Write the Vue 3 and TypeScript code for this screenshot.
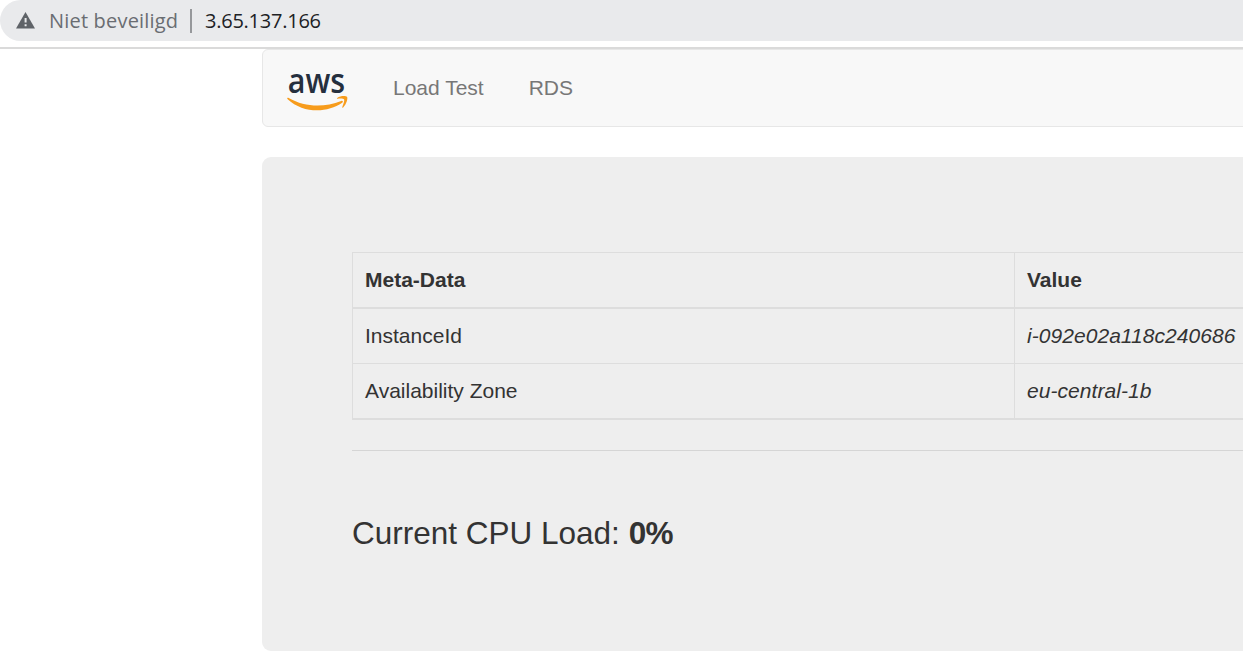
<script setup lang="ts">
interface MetaRow {
  label: string
  value: string
}

const links: string[] = ['Load Test', 'RDS']
const rows: MetaRow[] = [
  { label: 'InstanceId', value: 'i-092e02a118c240686' },
  { label: 'Availability Zone', value: 'eu-central-1b' },
]
const cpuLoad = 0
</script>

<template>
  <div class="page">
    <header class="toolbar">
      <div class="address">
        <svg class="warn" width="20" height="17" viewBox="0 0 20 17">
          <path d="M9.5 0 19 16.6H0Z" fill="#5f6368" />
          <path d="M8.6 6h2v4.6h-2zM8.6 12.2h2v2.1h-2z" fill="#e9eaec" />
        </svg>
        <span class="security">Niet beveiligd</span>
        <span class="divider"></span>
        <span class="url">3.65.137.166</span>
      </div>
    </header>
    <main class="container">
      <nav class="navbar">
        <svg class="logo" width="64" height="54" viewBox="0 0 64 54">
          <text x="-0.2" y="33.6" textLength="57.4" lengthAdjust="spacingAndGlyphs">aws</text>
          <g transform="translate(-2 10.3)" fill="#f79c1c">
            <path d="M1.4 29.6C0.9 28.6 1.7 28.2 2.7 28.7C19 38 38 38.4 55.2 31.6C56.8 31 57.6 32.5 56.2 33.5C41 43.8 17.5 44.5 1.4 29.6Z" />
            <path d="M51.2 28.6C54.2 26.4 59.8 26.3 61 27.5C62.2 29 60.4 35.1 57.2 38.1C56.6 38.6 56 38.3 56.3 37.6C57.2 35.4 58.7 31.2 58.1 30.2C57.4 29 53.9 29.1 51.7 29.5C50.9 29.6 50.7 29 51.2 28.6Z" />
          </g>
        </svg>
        <a v-for="link in links" :key="link" class="link">{{ link }}</a>
      </nav>
      <section class="jumbotron">
        <div class="table">
          <div class="row head">
            <div class="cell">Meta-Data</div>
            <div class="cell">Value</div>
          </div>
          <div v-for="row in rows" :key="row.label" class="row">
            <div class="cell">{{ row.label }}</div>
            <div class="cell"><i>{{ row.value }}</i></div>
          </div>
        </div>
        <div class="rule"></div>
        <p class="load">Current CPU Load: <b>{{ cpuLoad }}%</b></p>
      </section>
    </main>
  </div>
</template>

<style>
body {
  margin: 0;
  overflow: hidden;
  background: #fff;
}
</style>

<style scoped>
.page {
  height: 655px;
  overflow: hidden;
  background: #fff;
  font-family: "Liberation Sans", Arial, sans-serif;
  color: #333;
}
.toolbar {
  box-sizing: border-box;
  height: 49px;
  border-bottom: 2px solid #dadada;
}
.address {
  display: flex;
  align-items: center;
  box-sizing: border-box;
  height: 41px;
  padding-left: 16px;
  border-radius: 21px 0 0 21px;
  background: #e9eaec;
  font: 20px/41px "Open Sans", "Noto Sans", sans-serif;
  white-space: nowrap;
}
.security {
  width: 128px;
  margin-left: 13px;
  color: #6a6d72;
  letter-spacing: 0.19px;
}
.divider {
  width: 2px;
  height: 24px;
  margin: 0 13px 0 13px;
  background: #96989b;
}
.url {
  color: #202124;
  letter-spacing: -0.24px;
}
.container {
  width: 1230px;
  margin-left: 262px;
}
.navbar {
  display: flex;
  box-sizing: border-box;
  height: 78px;
  padding-left: 25px;
  border: 1px solid #e7e7e7;
  border-radius: 6px;
  background: #f8f8f8;
}
.logo {
  overflow: visible;
  margin-top: 9px;
  margin-right: 41px;
}
.logo text {
  font: 600 34px "Open Sans", sans-serif;
  fill: #252f3e;
}
.link {
  margin-right: 45px;
  color: #777;
  font-size: 21px;
  line-height: 76px;
}
.jumbotron {
  box-sizing: border-box;
  height: 494px;
  margin-top: 30px;
  padding: 95px 90px 0;
  border-radius: 9px;
  background: #eee;
}
.table {
  border: 1px solid #ddd;
  border-bottom-width: 2px;
}
.row {
  display: grid;
  grid-template-columns: 661px 1fr;
  height: 54px;
  font-size: 21px;
  line-height: 54px;
}
.row + .row {
  border-top: 1px solid #ddd;
}
.head {
  border-bottom: 1px solid #ddd;
  font-weight: 700;
}
.cell {
  padding-left: 12px;
}
.cell i {
  letter-spacing: 0.05px;
}
.cell + .cell {
  border-left: 1px solid #ddd;
}
.rule {
  height: 1px;
  margin-top: 30px;
  background: #d5d5d5;
}
.load {
  margin: 62px 0 0;
  font-size: 31.5px;
  line-height: 40px;
}
.load b {
  letter-spacing: -0.6px;
}
</style>
